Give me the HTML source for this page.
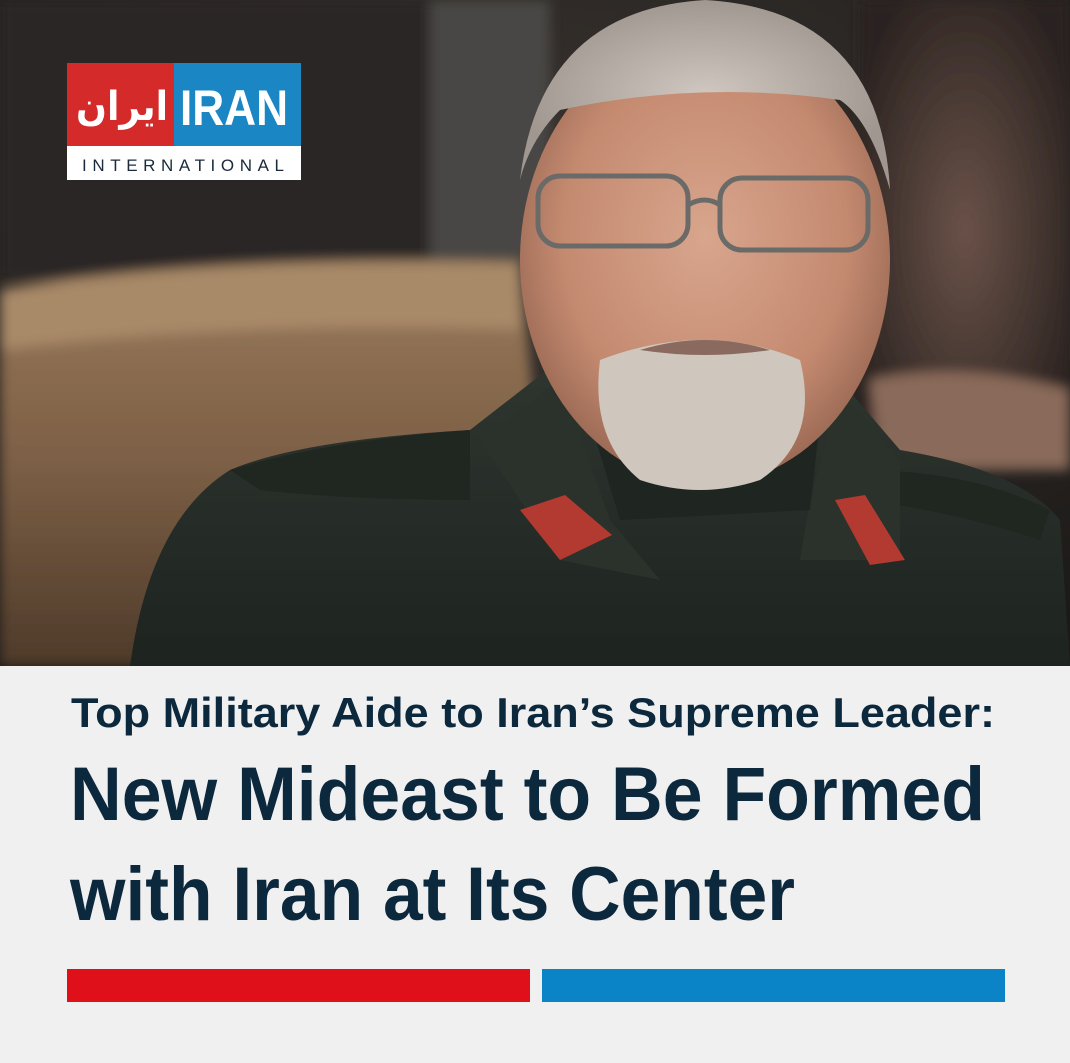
<!DOCTYPE html>
<html><head><meta charset="utf-8"><style>
html,body{margin:0;padding:0;width:1070px;height:1063px;overflow:hidden;background:#f0f0f0}
svg{display:block}
</style></head><body>
<svg width="1070" height="1063" viewBox="0 0 1070 1063" xmlns="http://www.w3.org/2000/svg">
<defs>
<radialGradient id="bg" cx="0.5" cy="0.3" r="0.8"><stop offset="0" stop-color="#3a3430"/><stop offset="1" stop-color="#1c1a18"/></radialGradient>
<linearGradient id="sofa" x1="0" y1="0" x2="0" y2="1"><stop offset="0" stop-color="#9a7a5c"/><stop offset="0.5" stop-color="#7c5f45"/><stop offset="1" stop-color="#4e3a2a"/></linearGradient>
<radialGradient id="face" cx="0.5" cy="0.45" r="0.55"><stop offset="0" stop-color="#d8a58d"/><stop offset="0.7" stop-color="#c48a70"/><stop offset="1" stop-color="#9c6a55"/></radialGradient>
<radialGradient id="hair" cx="0.5" cy="0.5" r="0.5"><stop offset="0" stop-color="#d0c8c0"/><stop offset="1" stop-color="#a09890"/></radialGradient>
<linearGradient id="uni" x1="0" y1="0" x2="0" y2="1"><stop offset="0" stop-color="#2f3630"/><stop offset="1" stop-color="#1d231f"/></linearGradient>
<radialGradient id="rt" cx="0.5" cy="0.5" r="0.6"><stop offset="0" stop-color="#6a5248"/><stop offset="1" stop-color="#2a2220"/></radialGradient>
<filter id="bl"><feGaussianBlur stdDeviation="6"/></filter>
</defs>
<rect x="0" y="0" width="1070" height="666" fill="url(#bg)"/>
<g filter="url(#bl)">
<rect x="0" y="0" width="520" height="280" fill="#2b2826"/>
<rect x="430" y="0" width="120" height="260" fill="#4a4644"/>
<rect x="860" y="0" width="210" height="460" fill="url(#rt)"/>
<path d="M0 290 Q200 255 520 262 L560 666 L0 666 Z" fill="url(#sofa)"/>
<path d="M0 290 Q200 255 520 262 L520 330 Q250 320 0 350 Z" fill="#a88968"/>
<path d="M870 380 Q960 360 1070 390 L1070 470 L880 470 Z" fill="#8a6a5a"/>
</g>
<path d="M130 666 Q150 520 230 470 Q300 440 470 430 L560 360 L840 380 L900 450 Q1020 470 1060 520 L1070 666 Z" fill="url(#uni)"/>
<path d="M230 470 Q330 440 470 430 L470 500 Q350 500 260 490 Z" fill="#202620"/>
<path d="M860 470 Q970 470 1050 510 L1040 540 Q950 510 860 500 Z" fill="#202620"/>
<path d="M480 440 L560 380 L610 520 L660 580 L560 560 Z" fill="#2b322c"/>
<path d="M840 390 L900 460 L900 560 L800 560 L810 500 Z" fill="#2b322c"/>
<path d="M520 510 L565 495 L612 535 L560 560 Z" fill="#b33a30"/>
<path d="M835 500 L865 495 L905 560 L870 565 Z" fill="#b33a30"/>
<path d="M590 420 L820 420 L810 510 L620 520 Z" fill="#1f2520"/>
<ellipse cx="705" cy="260" rx="185" ry="225" fill="url(#face)"/>
<path d="M520 180 Q540 10 705 0 Q880 10 890 190 Q870 120 840 100 Q700 80 560 110 Q530 140 520 180 Z" fill="url(#hair)"/>
<path d="M600 360 Q705 320 800 360 Q820 440 760 480 Q700 500 640 480 Q590 440 600 360 Z" fill="#cfc6bd"/>
<path d="M640 350 Q705 330 770 350 Q705 360 640 350 Z" fill="#8a6a5e"/>
<rect x="538" y="176" width="150" height="70" rx="22" fill="none" stroke="#6a6a68" stroke-width="5"/>
<rect x="720" y="178" width="148" height="72" rx="22" fill="none" stroke="#6a6a68" stroke-width="5"/>
<path d="M688 205 Q705 195 720 205" fill="none" stroke="#6a6a68" stroke-width="5"/>
<!-- logo -->
<rect x="67" y="63" width="107" height="83" fill="#d42a2a"/>
<rect x="174" y="63" width="127" height="83" fill="#1a86c4"/>
<rect x="67" y="146" width="234" height="34" fill="#ffffff"/>
<text x="180" y="125" font-family="Liberation Sans, sans-serif" font-weight="bold" font-size="50" fill="#fff" textLength="108" lengthAdjust="spacingAndGlyphs">IRAN</text>
<text x="122" y="120" text-anchor="middle" font-family="DejaVu Sans, sans-serif" font-weight="bold" font-size="40" fill="#fff" textLength="92" lengthAdjust="spacingAndGlyphs">ایران</text>
<text x="82" y="171" font-family="Liberation Sans, sans-serif" font-size="17" fill="#1a2a3a" textLength="202" lengthAdjust="spacing">INTERNATIONAL</text>
<rect x="0" y="666" width="1070" height="397" fill="#f0f0f0"/>
<g font-family="Liberation Sans, sans-serif" font-weight="bold" fill="#0c283d">
<text x="71" y="727" font-size="42" textLength="924" lengthAdjust="spacingAndGlyphs">Top Military Aide to Iran’s Supreme Leader:</text>
<text x="70" y="820" font-size="76" textLength="915" lengthAdjust="spacingAndGlyphs">New Mideast to Be Formed</text>
<text x="70" y="920" font-size="76" textLength="725" lengthAdjust="spacingAndGlyphs">with Iran at Its Center</text>
</g>
<rect x="67" y="969" width="463" height="33" fill="#e0101a"/>
<rect x="542" y="969" width="463" height="33" fill="#0a84c6"/>
</svg>
</body></html>
